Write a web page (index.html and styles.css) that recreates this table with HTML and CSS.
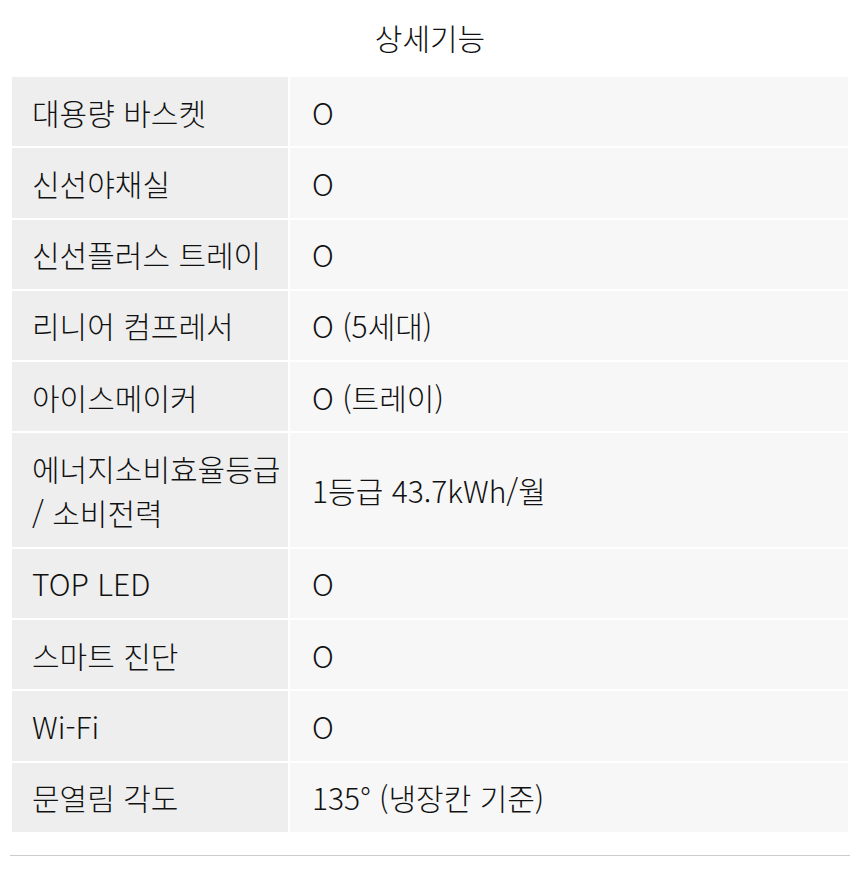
FILE: index.html
```html
<!DOCTYPE html>
<html lang="ko">
<head>
<meta charset="utf-8">
<link rel="stylesheet" href="styles.css">
</head>
<body>
<div class="spec">
  <h2 class="spec-title">상세기능</h2>
  <table class="spec-table">
    <tbody>
      <tr><th>대용량 바스켓</th><td>O</td></tr>
      <tr><th>신선야채실</th><td>O</td></tr>
      <tr><th>신선플러스 트레이</th><td>O</td></tr>
      <tr><th>리니어 컴프레서</th><td>O (5세대)</td></tr>
      <tr><th>아이스메이커</th><td>O (트레이)</td></tr>
      <tr><th>에너지소비효율등급<br>/ 소비전력</th><td>1등급 43.7kWh/월</td></tr>
      <tr><th>TOP LED</th><td>O</td></tr>
      <tr><th>스마트 진단</th><td>O</td></tr>
      <tr><th>Wi-Fi</th><td>O</td></tr>
      <tr><th>문열림 각도</th><td>135° (냉장칸 기준)</td></tr>
    </tbody>
  </table>
  <hr class="spec-rule">
</div>
</body>
</html>
```
FILE: styles.css
```css
html, body {
  margin: 0;
  padding: 0;
  background: #fff;
}
body {
  font-family: "Noto Sans CJK KR", "Noto Sans", sans-serif;
  color: #111;
}
.spec {
  padding: 0 10px;
}
.spec-title {
  margin: 0;
  padding-top: 17px;
  height: 75px;
  box-sizing: border-box;
  text-align: center;
  font-size: 30px;
  font-weight: 300;
  line-height: 40px;
}
.spec-table {
  width: 100%;
  border-collapse: separate;
  border-spacing: 2px;
  table-layout: fixed;
}
.spec-table th,
.spec-table td {
  font-size: 30px;
  font-weight: 300;
  line-height: 44px;
  text-align: left;
  vertical-align: middle;
  padding: 12.65px 20px;
  white-space: nowrap;
}
.spec-table th {
  width: 256px;
  padding-right: 0;
  background: #eeeeee;
}
.spec-table td {
  background: #f7f7f7;
  padding-left: 22px;
}
.spec-rule {
  border: 0;
  border-top: 1px solid #cccccc;
  margin: 21px 0 0;
}
```
